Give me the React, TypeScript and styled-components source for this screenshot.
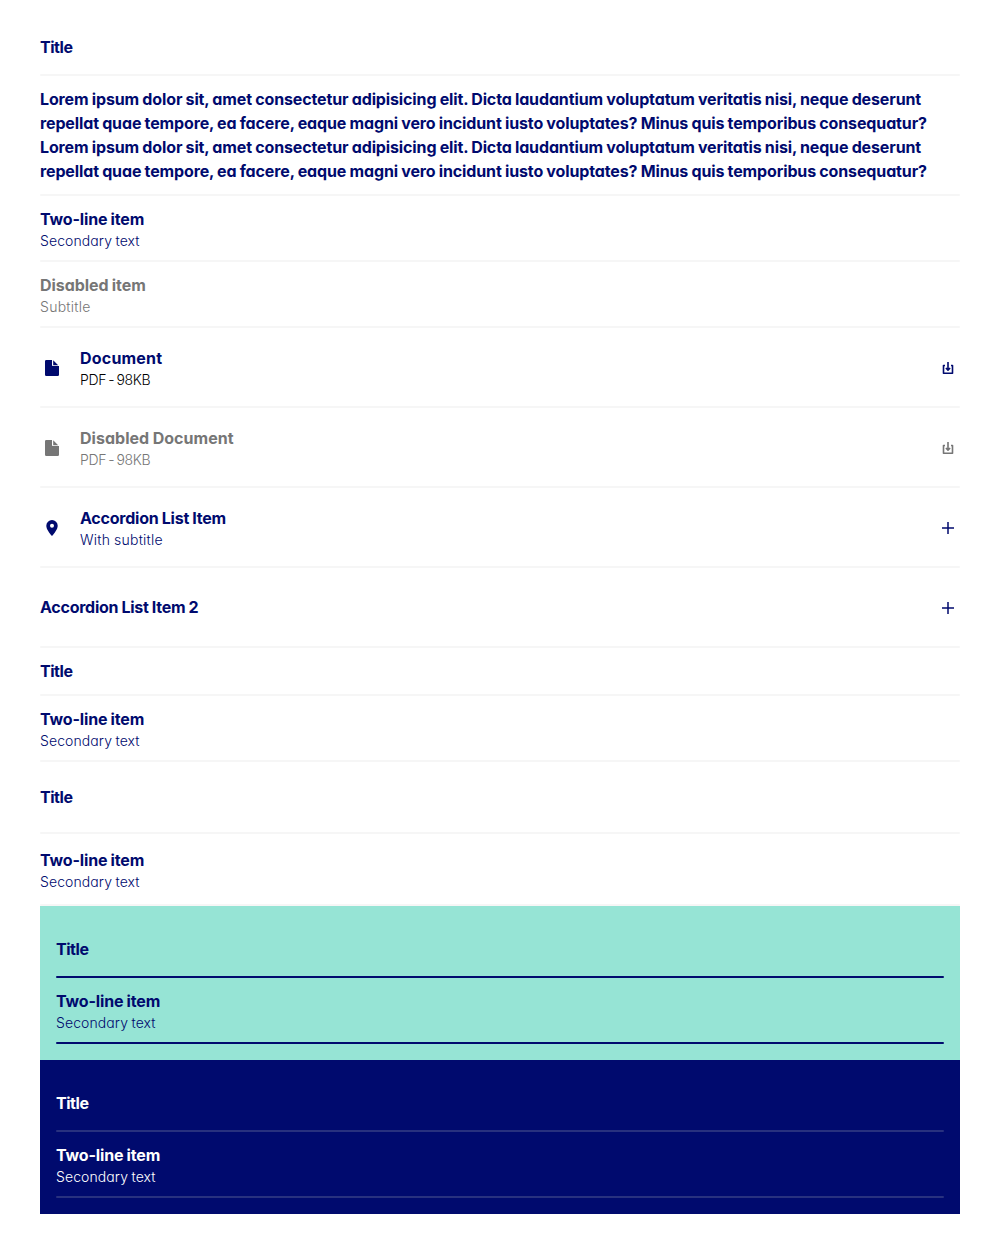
import React from "react";
import styled, { createGlobalStyle, css } from "styled-components";

const BLUE = "#000a6e";

const GlobalStyle = createGlobalStyle`
  * { box-sizing: border-box; }
  body {
    margin: 0;
    background: #ffffff;
    color: ${BLUE};
    font-family: Inter, "Noto Sans", sans-serif;
    font-feature-settings: "cv11" 1;
  }
`;

type Tone = "light" | "mint" | "navy";

const dividers: Record<Tone, string> = {
  light: "#f6f6f6",
  mint: BLUE,
  navy: "#28317f",
};

const Page = styled.main`
  padding: 20px 40px;
`;

const Panel = styled.section<{ $tone: Tone }>`
  padding: 16px;
  background: ${(p) => (p.$tone === "navy" ? BLUE : "#96e4d5")};
  color: ${(p) => (p.$tone === "navy" ? "#ffffff" : BLUE)};
`;

const Row = styled.div<{ $pad: number; $tone: Tone; $disabled?: boolean }>`
  position: relative;
  display: flex;
  align-items: center;
  gap: 16px;
  padding: ${(p) => p.$pad}px 0;
  ${(p) => p.$disabled && css`color: #767676;`}

  &::after {
    content: "";
    position: absolute;
    inset: auto 0 0;
    height: 2px;
    border-radius: 1px;
    background: ${(p) => dividers[p.$tone]};
  }
`;

const Texts = styled.div`
  flex: 1;
  min-width: 0;
`;

const Title = styled.div<{ $track: number }>`
  margin-top: -1px;
  padding-bottom: 1px;
  font-size: 16px;
  line-height: 24px;
  font-weight: 700;
  letter-spacing: ${(p) => p.$track}px;
  word-spacing: -0.4px;
  white-space: pre;
`;

const Subtitle = styled.div<{ $track: number; $gap: number; $color?: string }>`
  font-size: 14px;
  line-height: 18px;
  font-weight: 300;
  letter-spacing: ${(p) => p.$track}px;
  word-spacing: ${(p) => p.$gap}px;
  ${(p) => p.$color && css`color: ${p.$color};`}
`;

const Icon = styled.svg`
  flex: none;
  display: block;
  width: 24px;
  height: 24px;
`;

const DocumentIcon = () => (
  <Icon viewBox="0 0 24 24" fill="currentColor">
    <path d="M6.3 4H12v5.200a.8.8 0 0 0 .8.8H19v8.700a1.300 1.300 0 0 1-1.300 1.300H6.300A1.300 1.300 0 0 1 5 18.700V5.300A1.300 1.300 0 0 1 6.300 4Z" />
    <path d="M13.200 4.300 18.200 9.200h-5Z" />
  </Icon>
);

const PinIcon = () => (
  <Icon viewBox="0 0 24 24" fill="currentColor" fillRule="evenodd">
    <path d="M12 4a5.700 5.700 0 0 0-5.700 5.700c0 3.600 3.200 7.300 5.700 10.300 2.500-3 5.700-6.700 5.700-10.300A5.700 5.700 0 0 0 12 4Zm0 3.800a2 2 0 1 1 0 4 2 2 0 0 1 0-4Z" />
  </Icon>
);

const DownloadIcon = () => (
  <Icon viewBox="0 0 24 24" fill="none" stroke="currentColor" strokeWidth="1.6" strokeLinejoin="round">
    <path d="M9 9.500H7.500v7.800h9V9.500H15" />
    <path d="M12 6v8M9.900 12l2.100 2.100 2.100-2.100" />
  </Icon>
);

const PlusIcon = () => (
  <Icon viewBox="0 0 24 24" fill="none" stroke="currentColor" strokeWidth="1.5">
    <path d="M6 12h12M12 6v12" />
  </Icon>
);

interface ItemProps {
  title: string;
  subtitle?: string;
  subtitleColor?: string;
  pad?: number;
  tone?: Tone;
  disabled?: boolean;
  lead?: React.ReactNode;
  trail?: React.ReactNode;
  track?: number;
  subTrack?: number;
  subGap?: number;
}

const Item = ({
  title,
  subtitle,
  subtitleColor,
  pad = 12,
  tone = "light",
  disabled,
  lead,
  trail,
  track = -0.15,
  subTrack = 0.09,
  subGap = -0.5,
}: ItemProps) => (
  <Row $pad={pad} $tone={tone} $disabled={disabled}>
    {lead}
    <Texts>
      <Title $track={track}>{title}</Title>
      {subtitle && (
        <Subtitle $track={subTrack} $gap={subGap} $color={subtitleColor}>
          {subtitle}
        </Subtitle>
      )}
    </Texts>
    {trail}
  </Row>
);

const LOREM = [
  "Lorem ipsum dolor sit, amet consectetur adipisicing elit. Dicta laudantium voluptatum veritatis nisi, neque deserunt",
  "repellat quae tempore, ea facere, eaque magni vero incidunt iusto voluptates? Minus quis temporibus consequatur?",
].join("\n");

export default function App() {
  return (
    <>
      <GlobalStyle />
      <Page>
        <Item title="Title" pad={16} track={-0.45} />
        <Item title={`${LOREM}\n${LOREM}`} track={-0.125} />
        <Item title="Two-line item" subtitle="Secondary text" />
        <Item title="Disabled item" subtitle="Subtitle" disabled track={-0.06} subTrack={0.28} />
        <Item title="Document" subtitle="PDF - 98KB" subtitleColor="#000000" pad={19} track={0.2} subTrack={-0.35} subGap={-1.4} lead={<DocumentIcon />} trail={<DownloadIcon />} />
        <Item title="Disabled Document" subtitle="PDF - 98KB" pad={19} disabled track={0.03} subTrack={-0.35} subGap={-1.4} lead={<DocumentIcon />} trail={<DownloadIcon />} />
        <Item title="Accordion List Item" subtitle="With subtitle" pad={19} track={-0.22} subTrack={0.26} lead={<PinIcon />} trail={<PlusIcon />} />
        <Item title="Accordion List Item 2" pad={28} track={-0.25} trail={<PlusIcon />} />
        <Item title="Title" track={-0.45} />
        <Item title="Two-line item" subtitle="Secondary text" />
        <Item title="Title" pad={24} track={-0.45} />
        <Item title="Two-line item" subtitle="Secondary text" pad={15} />
        <Panel $tone="mint">
          <Item title="Title" pad={16} tone="mint" track={-0.45} />
          <Item title="Two-line item" subtitle="Secondary text" tone="mint" />
        </Panel>
        <Panel $tone="navy">
          <Item title="Title" pad={16} tone="navy" track={-0.45} />
          <Item title="Two-line item" subtitle="Secondary text" tone="navy" />
        </Panel>
      </Page>
    </>
  );
}
